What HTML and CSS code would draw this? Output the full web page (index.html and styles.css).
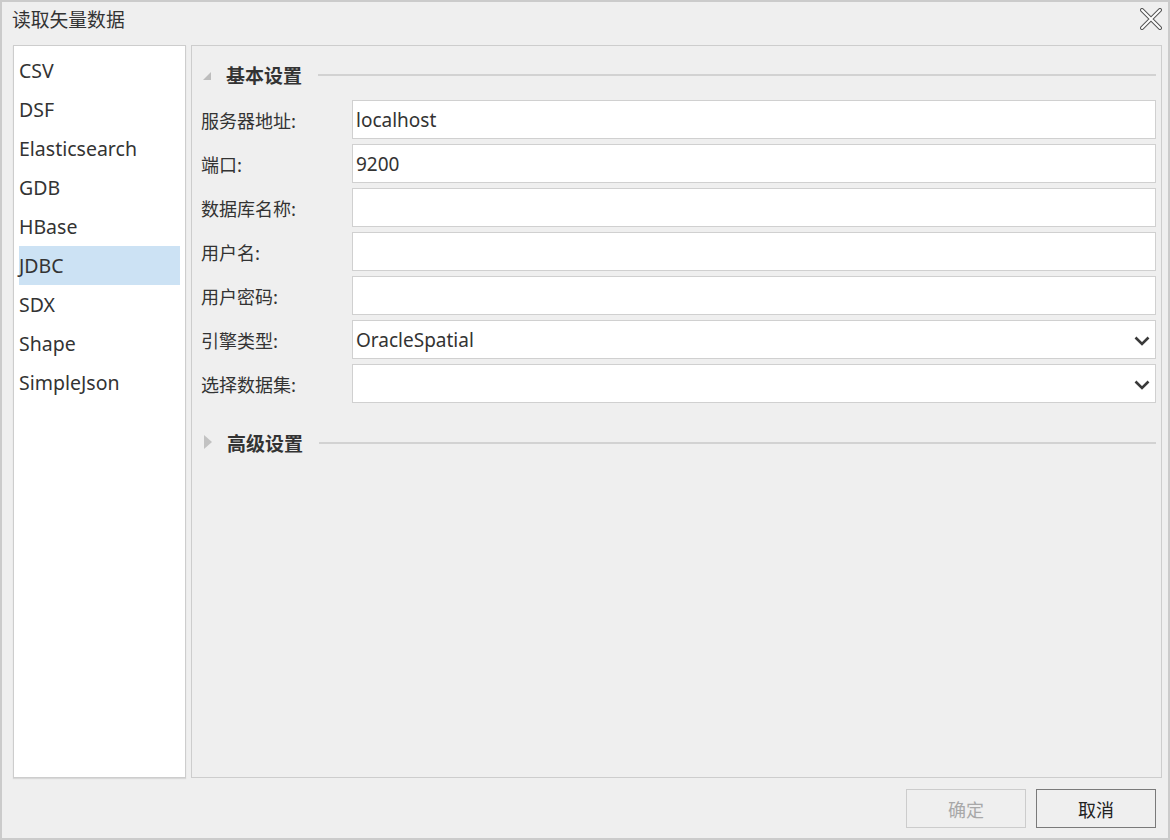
FILE: index.html
```html
<!DOCTYPE html>
<html lang="zh-CN">
<head>
    <meta charset="UTF-8">
    <link rel="stylesheet" href="styles.css">
    <title>读取矢量数据</title>
</head>
<body>
    <div class="window">
        <div class="titlebar">
            <div class="title">读取矢量数据</div>
            <div class="close">
                <svg width="22" height="22" viewBox="0 0 22 22">
                    <path d="M2 2 L20 20 M20 2 L2 20" stroke="#555" stroke-width="4" stroke-linecap="round" fill="none"/>
                    <path d="M2 2 L20 20 M20 2 L2 20" stroke="#fff" stroke-width="2" stroke-linecap="round" fill="none"/>
                </svg>
            </div>
        </div>

        <div class="main">
            <div class="source-list">
                <div class="item">CSV</div>
                <div class="item">DSF</div>
                <div class="item">Elasticsearch</div>
                <div class="item">GDB</div>
                <div class="item">HBase</div>
                <div class="item selected">JDBC</div>
                <div class="item">SDX</div>
                <div class="item">Shape</div>
                <div class="item">SimpleJson</div>
            </div>

            <div class="settings">
                <div class="section-header">
                    <span class="arrow-open"></span>
                    <span class="section-title">基本设置</span>
                    <span class="section-line"></span>
                </div>

                <div class="row">
                    <div class="label">服务器地址:</div>
                    <div class="field">localhost</div>
                </div>
                <div class="row">
                    <div class="label">端口:</div>
                    <div class="field">9200</div>
                </div>
                <div class="row">
                    <div class="label">数据库名称:</div>
                    <div class="field"></div>
                </div>
                <div class="row">
                    <div class="label">用户名:</div>
                    <div class="field"></div>
                </div>
                <div class="row">
                    <div class="label">用户密码:</div>
                    <div class="field"></div>
                </div>
                <div class="row">
                    <div class="label">引擎类型:</div>
                    <div class="field combo">
                        <span>OracleSpatial</span>
                        <svg width="16" height="10" viewBox="0 0 16 10"><path d="M1.5 1.5 L8 8 L14.5 1.5" stroke="#3a3a3a" stroke-width="2.6" fill="none"/></svg>
                    </div>
                </div>
                <div class="row">
                    <div class="label">选择数据集:</div>
                    <div class="field combo">
                        <span></span>
                        <svg width="16" height="10" viewBox="0 0 16 10"><path d="M1.5 1.5 L8 8 L14.5 1.5" stroke="#3a3a3a" stroke-width="2.6" fill="none"/></svg>
                    </div>
                </div>

                <div class="section-header advanced">
                    <span class="arrow-closed"></span>
                    <span class="section-title">高级设置</span>
                    <span class="section-line"></span>
                </div>
            </div>
        </div>

        <div class="footer">
            <button class="btn" disabled>确定</button>
            <button class="btn">取消</button>
        </div>
    </div>
</body>
</html>
```

FILE: styles.css
```css
* {
    box-sizing: border-box;
}

body {
    margin: 0;
    font-family: "Noto Sans", "Noto Sans CJK SC", sans-serif;
    color: #333;
}

.window {
    width: 1170px;
    height: 840px;
    border: 2px solid #cbcbcb;
    background-color: #efefef;
    display: flex;
    flex-direction: column;
}

.titlebar {
    height: 43px;
    display: flex;
    justify-content: space-between;
    align-items: flex-start;
    padding: 5px 6px 0 10px;
}

.title {
    font-family: "Noto Sans CJK SC", sans-serif;
    font-size: 18.8px;
    line-height: 24px;
    color: #333;
}

.close {
    padding-top: 1px;
}

.main {
    height: 733px;
    display: flex;
    gap: 5px;
    padding: 0 6px 0 11px;
}

.source-list {
    width: 173px;
    background-color: #fff;
    border: 1px solid #cdcdcd;
    box-shadow: 0 1px 1px #d8d8d8;
    padding: 5px 5px 0 5px;
}

.item {
    height: 39px;
    line-height: 39px;
    font-size: 19.5px;
    color: #333;
}

.item.selected {
    background-color: #cce2f4;
}

.settings {
    flex: 1;
    border: 1px solid #cdcdcd;
    padding: 9px 5px 0 9px;
}

.section-header {
    height: 38px;
    display: flex;
    align-items: center;
    margin-bottom: 7px;
}

.section-header.advanced {
    margin-top: 20px;
}

.arrow-open {
    width: 0;
    height: 0;
    margin: 4px 0 0 2px;
    border-left: 8px solid transparent;
    border-bottom: 8px solid #bdbdbd;
}

.arrow-closed {
    width: 0;
    height: 0;
    margin-left: 3px;
    border-top: 7px solid transparent;
    border-bottom: 7px solid transparent;
    border-left: 8px solid #c2c2c2;
}

.section-title {
    font-family: "Noto Sans CJK SC", sans-serif;
    font-size: 19px;
    font-weight: bold;
    color: #333;
    margin-left: 15px;
    padding-right: 16px;
}

.advanced .section-title {
    margin-left: 15px;
}

.section-line {
    flex: 1;
    height: 2px;
    background-color: #d2d2d2;
    margin-top: 1px;
}

.row {
    display: flex;
    align-items: center;
    height: 39px;
    margin-bottom: 5px;
}

.label {
    width: 151px;
    font-family: "Noto Sans CJK SC", sans-serif;
    font-size: 18px;
    color: #333;
}

.field {
    flex: 1;
    height: 39px;
    background-color: #fff;
    border: 1px solid #d0d0d0;
    padding: 1px 3px 0 3px;
    font-size: 19px;
    line-height: 37px;
    color: #333;
}

.combo {
    display: flex;
    justify-content: space-between;
    align-items: center;
    padding-right: 5px;
}

.combo svg {
    margin-top: 1px;
}

.footer {
    flex: 1;
    display: flex;
    justify-content: flex-end;
    align-items: flex-start;
    gap: 10px;
    padding: 11px 12px 0 0;
}

.btn {
    width: 120px;
    height: 39px;
    background-color: #efefef;
    border: 1px solid #7a7a7a;
    font-family: "Noto Sans CJK SC", sans-serif;
    font-size: 18px;
    color: #222;
}

.btn:disabled {
    border-color: #cccccc;
    color: #a8a8a8;
}
```
